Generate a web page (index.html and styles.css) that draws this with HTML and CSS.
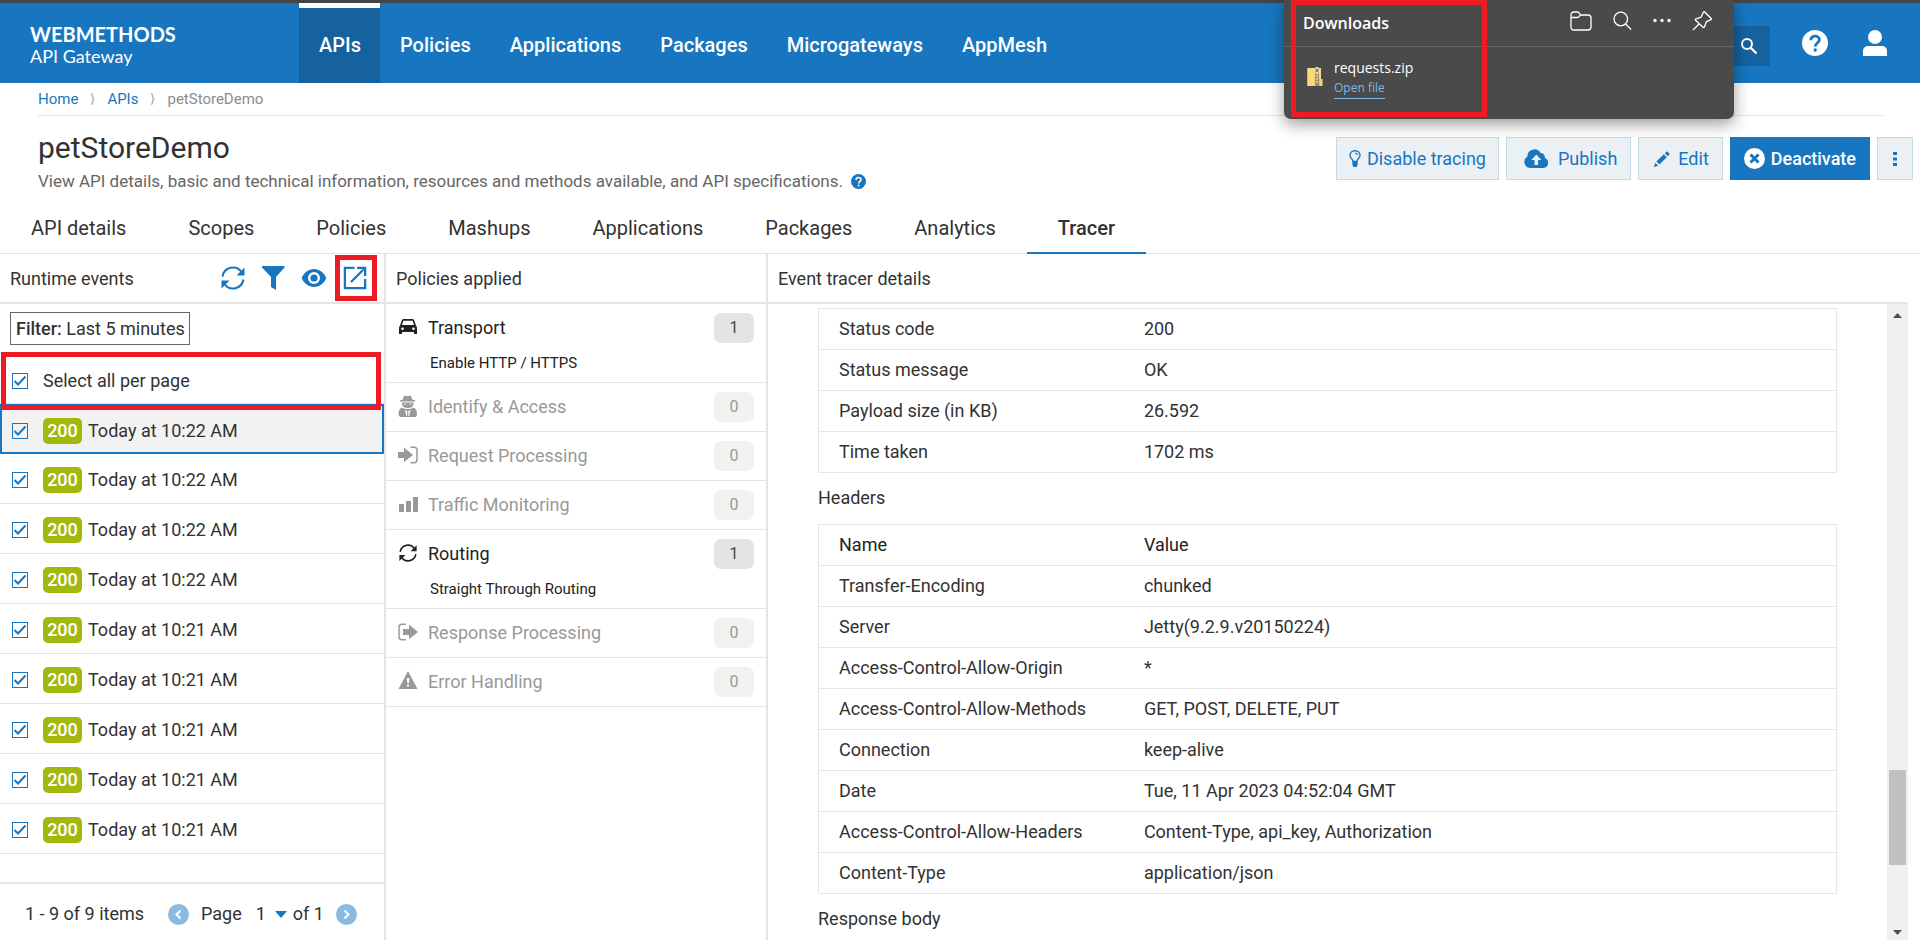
FILE: index.html
```html
<!DOCTYPE html>
<html lang="en">
<head>
<meta charset="utf-8">
<title>API Gateway - petStoreDemo</title>
<link rel="stylesheet" href="styles.css">
</head>
<body>
<svg class="sprite" aria-hidden="true">
  <symbol id="i-sync" viewBox="0 0 24 24"><path fill="none" stroke="currentColor" stroke-width="2.1" d="M1.6 10.5A10.4 10.4 0 0 1 20.6 6.300M22.400 13.500A10.4 10.4 0 0 1 3.400 17.700"/><path fill="currentColor" d="M23.500 1.500v8h-8zM.5 22.500v-8h8z"/></symbol>
  <symbol id="i-check" viewBox="0 0 16 16"><path fill="none" stroke="currentColor" stroke-width="2" d="M2.500 8l3.500 3.500 7.500-8"/></symbol>
  <symbol id="i-help" viewBox="0 0 26 26"><circle cx="13" cy="13" r="13" fill="currentColor"/><path fill="none" class="cut" stroke-width="2.800" d="M8.800 10.200c0-5.600 8.600-5.300 8.600-.4 0 3.200-4.200 3.200-4.200 6.700"/><circle class="cutfill" cx="13.200" cy="20" r="1.700"/></symbol>
</svg>

<header class="topbar">
  <div class="brand"><strong>WEBMETHODS</strong><span>API Gateway</span></div>
  <nav class="mainnav">
    <a class="current" href="#">APIs</a><a href="#">Policies</a><a href="#">Applications</a><a href="#">Packages</a><a href="#">Microgateways</a><a href="#">AppMesh</a>
  </nav>
  <div class="tools">
    <button class="search" aria-label="Search"><svg width="18" height="18" viewBox="0 0 18 18"><circle cx="7" cy="7" r="5" fill="none" stroke="currentColor" stroke-width="2"/><path stroke="currentColor" stroke-width="2.400" d="M10.500 10.500l6 6"/></svg></button>
    <button class="tool" aria-label="Help"><svg class="on-blue" width="26" height="26"><use href="#i-help"/></svg></button>
    <button class="tool" aria-label="Account"><svg width="26" height="26" viewBox="0 0 26 26"><circle cx="13" cy="7" r="7" fill="currentColor"/><path fill="currentColor" d="M1 26v-5c0-3 2-5 6-5h12c4 0 6 2 6 5v5z"/></svg></button>
  </div>
</header>

<nav class="crumbs"><a href="#">Home</a><i>⟩</i><a href="#">APIs</a><i>⟩</i><span>petStoreDemo</span></nav>

<section class="intro">
  <div>
    <h1>petStoreDemo</h1>
    <p>View API details, basic and technical information, resources and methods available, and API specifications. <svg class="hint" width="15" height="15"><use href="#i-help"/></svg></p>
  </div>
  <div class="actions">
    <button><svg width="12" height="17" viewBox="0 0 12 17"><path fill="none" stroke="currentColor" stroke-width="1.400" d="M4 11.500C4 9 1 8.500 1 5.300a5 4.600 0 0 1 10 0C11 8.500 8 9 8 11.500z"/><path fill="none" stroke="currentColor" stroke-width="1.100" d="M6 3.200c1.500 0 2.300.7 2.300 1.800"/><path fill="currentColor" d="M3.400 11.500h5.200v3.200L7.500 17h-3l-1.100-2.300z"/></svg>Disable tracing</button>
    <button class="publish"><svg width="25" height="19" viewBox="0 0 25 19"><path fill="currentColor" fill-rule="evenodd" d="M6 19a6 6 0 0 1-2.600-11.200A7 7 0 0 1 16.500 4a4.200 4.200 0 0 1 4.300 5A5.200 5.200 0 0 1 19.500 19zM12.300 5.500l-5 5.500h3.200v5h3.600v-5h3.200z"/></svg>Publish</button>
    <button class="edit"><svg width="16" height="16" viewBox="0 0 16 16"><path fill="currentColor" d="M0 16l1.200-4.200 3 3zM2.400 10.600L9.800 3.200 12.800 6.200 5.400 13.600zM10.800 2.200L12.300.7q.6-.6 1.200 0l1.800 1.800q.6.600 0 1.200l-1.500 1.500z"/></svg>Edit</button>
    <button class="primary"><svg width="21" height="21" viewBox="0 0 21 21"><circle cx="10.500" cy="10.500" r="10.500" fill="currentColor"/><path class="cut" stroke-width="3" d="M6.500 6.500l8 8M14.500 6.500l-8 8"/></svg>Deactivate</button>
    <button class="more" aria-label="More"><svg width="4" height="16" viewBox="0 0 4 16"><path fill="currentColor" d="M0 1h4v3H0zM0 6.500h4v3H0zM0 12h4v3H0z"/></svg></button>
  </div>
</section>

<nav class="tabs">
  <a href="#">API details</a><a href="#">Scopes</a><a href="#">Policies</a><a href="#">Mashups</a><a href="#">Applications</a><a href="#">Packages</a><a href="#">Analytics</a><a class="current" href="#">Tracer</a>
</nav>

<main class="tracer">
  <section class="panel events">
    <header class="panel-head">
      <h2>Runtime events</h2>
      <div class="icons">
        <button aria-label="Refresh"><svg width="24" height="24"><use href="#i-sync"/></svg></button>
        <button aria-label="Filter"><svg width="24" height="24" viewBox="0 0 24 24"><path fill="currentColor" d="M1 0h22.500v1.500L15 11v13l-5-3V11L1 1.500z"/></svg></button>
        <button aria-label="Show"><svg width="26" height="24" viewBox="0 0 26 24"><path fill="currentColor" fill-rule="evenodd" d="M13 3C7.500 3 3 6.500.7 12 3 17.500 7.500 21 13 21s10-3.500 12.300-9C23 6.500 18.500 3 13 3zm0 3a6 6 0 1 1 0 12 6 6 0 0 1 0-12z"/><circle cx="13" cy="12" r="3.600" fill="currentColor"/></svg></button>
        <button class="marked-icon" aria-label="Export"><svg width="24" height="24" viewBox="0 0 24 24"><path fill="none" stroke="currentColor" stroke-width="2.300" d="M11.500 1.900H1.900v20.200h20.200V13M8 16L20 4"/><path fill="currentColor" d="M14 .8h9.300V10h-2.300V4.800L19.200 3H14z"/></svg></button>
      </div>
    </header>
    <div class="filter"><span><b>Filter:</b> Last 5 minutes</span></div>
    <ul class="rows">
      <li class="all"><label><input type="checkbox" checked><svg width="16" height="16"><use href="#i-check"/></svg>Select all per page</label></li>
      <li class="selected"><label><input type="checkbox" checked><svg width="16" height="16"><use href="#i-check"/></svg><b>200</b>Today at 10:22 AM</label></li>
      <li><label><input type="checkbox" checked><svg width="16" height="16"><use href="#i-check"/></svg><b>200</b>Today at 10:22 AM</label></li>
      <li><label><input type="checkbox" checked><svg width="16" height="16"><use href="#i-check"/></svg><b>200</b>Today at 10:22 AM</label></li>
      <li><label><input type="checkbox" checked><svg width="16" height="16"><use href="#i-check"/></svg><b>200</b>Today at 10:22 AM</label></li>
      <li><label><input type="checkbox" checked><svg width="16" height="16"><use href="#i-check"/></svg><b>200</b>Today at 10:21 AM</label></li>
      <li><label><input type="checkbox" checked><svg width="16" height="16"><use href="#i-check"/></svg><b>200</b>Today at 10:21 AM</label></li>
      <li><label><input type="checkbox" checked><svg width="16" height="16"><use href="#i-check"/></svg><b>200</b>Today at 10:21 AM</label></li>
      <li><label><input type="checkbox" checked><svg width="16" height="16"><use href="#i-check"/></svg><b>200</b>Today at 10:21 AM</label></li>
      <li><label><input type="checkbox" checked><svg width="16" height="16"><use href="#i-check"/></svg><b>200</b>Today at 10:21 AM</label></li>
    </ul>
    <footer class="pager">
      <span class="count">1 - 9 of 9 items</span>
      <button aria-label="Previous page"><svg width="21" height="21" viewBox="0 0 21 21"><circle cx="10.500" cy="10.500" r="10.500" fill="currentColor"/><path class="cut" fill="none" stroke-width="2" d="M12.500 6.500l-4 4 4 4"/></svg></button>
      <label for="page">Page</label>
      <span class="pick"><select id="page"><option>1</option></select><svg width="12" height="7" viewBox="0 0 12 7"><path fill="currentColor" d="M0 0h12L6 7z"/></svg></span>
      <span>of 1</span>
      <button class="next" aria-label="Next page"><svg width="21" height="21" viewBox="0 0 21 21"><circle cx="10.500" cy="10.500" r="10.500" fill="currentColor"/><path class="cut" fill="none" stroke-width="2" d="M8.500 6.500l4 4-4 4"/></svg></button>
    </footer>
  </section>

  <section class="panel policies">
    <header class="panel-head"><h2>Policies applied</h2></header>
    <ul>
      <li class="on"><div><svg width="20" height="20" viewBox="0 0 20 20"><path fill="currentColor" fill-rule="evenodd" d="M1 17v-6c0-1 .3-1.800 1-2.300l1.600-5C4 2.500 4.700 2 6 2h8c1.300 0 2 .5 2.400 1.700l1.600 5c.7.5 1 1.300 1 2.300v6h-3v-2H4v2zM5.300 3.800L4 8h12l-1.300-4.200zM4.500 10.500a1.300 1.300 0 1 0 0 2.600 1.300 1.300 0 0 0 0-2.600zm11 0a1.300 1.300 0 1 0 0 2.600 1.300 1.300 0 0 0 0-2.600z"/></svg><span>Transport</span><em>1</em></div><p>Enable HTTP / HTTPS</p></li>
      <li><div><svg width="20" height="22" viewBox="0 0 20 22"><path fill="currentColor" fill-rule="evenodd" d="M6 1q1.200-1 2.200 0 1.300.600 2.600 0 1-1 2.200 0l1.200 3.600 3 .6v1.300H2V5.200l2.800-.6zM4 7.500h11.500v2Q14.500 13 9.700 13 5 13 4 9.500zM6 8.800v.8h2.600v-.8zm5 0v.8h2.600v-.8zM3.500 12.500Q6 14 9.700 14t6.300-1.500q3 2 3 6.500 0 3-2.500 3h-13Q.5 22 .5 19q0-4.500 3-6.500zM7 15l1.300 6h.9V16zm5.500 0l-2.200 1v5h.9z"/></svg><span>Identify &amp; Access</span><em>0</em></div></li>
      <li><div><svg width="20" height="20" viewBox="0 0 20 20"><path fill="currentColor" d="M0 7h6V2.500l9 7.500-9 7V13H0z"/><path fill="none" stroke="currentColor" stroke-width="1.500" d="M12.500 2.200H16q3 0 3 3v9.500q0 3-3 3h-3.500"/></svg><span>Request Processing</span><em>0</em></div></li>
      <li><div><svg width="20" height="20" viewBox="0 0 20 20"><path fill="currentColor" d="M1 10h5v8H1zM8 7h5v11H8zM15 3h5v15h-5z"/></svg><span>Traffic Monitoring</span><em>0</em></div></li>
      <li class="on"><div><svg width="20" height="18"><use href="#i-sync"/></svg><span>Routing</span><em>1</em></div><p>Straight Through Routing</p></li>
      <li><div><svg width="20" height="20" viewBox="0 0 20 20"><path fill="currentColor" d="M5 7h6V2.500l9 7.500-9 7V13H5z"/><path fill="none" stroke="currentColor" stroke-width="1.500" d="M8 2.200H4q-3 0-3 3v9.500q0 3 3 3h4"/></svg><span>Response Processing</span><em>0</em></div></li>
      <li><div><svg width="20" height="20" viewBox="0 0 20 20"><path fill="currentColor" fill-rule="evenodd" d="M10 0l9.500 18H.5zM8.800 7l.4 5h1.800l.4-5zm.2 6.500v2h2v-2z"/></svg><span>Error Handling</span><em>0</em></div></li>
    </ul>
  </section>

  <section class="panel details">
    <header class="panel-head"><h2>Event tracer details</h2></header>
    <div class="viewport">
      <div class="content">
        <table>
          <tr><td>Status code</td><td>200</td></tr>
          <tr><td>Status message</td><td>OK</td></tr>
          <tr><td>Payload size (in KB)</td><td>26.592</td></tr>
          <tr><td>Time taken</td><td>1702 ms</td></tr>
        </table>
        <h3>Headers</h3>
        <table>
          <tr><th>Name</th><th>Value</th></tr>
          <tr><td>Transfer-Encoding</td><td>chunked</td></tr>
          <tr><td>Server</td><td>Jetty(9.2.9.v20150224)</td></tr>
          <tr><td>Access-Control-Allow-Origin</td><td>*</td></tr>
          <tr><td>Access-Control-Allow-Methods</td><td>GET, POST, DELETE, PUT</td></tr>
          <tr><td>Connection</td><td>keep-alive</td></tr>
          <tr><td>Date</td><td>Tue, 11 Apr 2023 04:52:04 GMT</td></tr>
          <tr><td>Access-Control-Allow-Headers</td><td>Content-Type, api_key, Authorization</td></tr>
          <tr><td>Content-Type</td><td>application/json</td></tr>
        </table>
        <h3>Response body</h3>
      </div>
      <div class="scrollbar">
        <svg width="9" height="5" viewBox="0 0 9 5"><path fill="currentColor" d="M0 5h9L4.500 0z"/></svg>
        <div class="track"><div class="thumb"></div></div>
        <svg width="9" height="5" viewBox="0 0 9 5"><path fill="currentColor" d="M0 0h9L4.500 5z"/></svg>
      </div>
    </div>
  </section>
</main>

<aside class="downloads">
  <header>
    <h2>Downloads</h2>
    <svg width="22" height="20" viewBox="0 0 22 20"><path fill="none" stroke="currentColor" stroke-width="1.300" d="M1 16V4q0-3 3-3h3.500q1 0 1.600.8L10.500 4H18q3 0 3 3v9q0 3-3 3H4q-3 0-3-3zM1 6.500h6.500q1 0 1.600-.8L10.500 4"/></svg>
    <svg width="19" height="20" viewBox="0 0 19 20"><circle cx="7.800" cy="8" r="6.800" fill="none" stroke="currentColor" stroke-width="1.300"/><path stroke="currentColor" stroke-width="1.400" d="M12.600 13l5.500 5.500"/></svg>
    <svg width="18" height="20" viewBox="0 0 18 20"><g fill="currentColor"><circle cx="2" cy="9.500" r="1.700"/><circle cx="9" cy="9.500" r="1.700"/><circle cx="16" cy="9.500" r="1.700"/></g></svg>
    <svg width="20" height="20" viewBox="0 0 20 20"><path fill="none" stroke="currentColor" stroke-width="1.300" stroke-linejoin="round" d="M12.500.8l6.700 6.700q.4 1-.7 1.300l-4 1.800-2 5.200q-.7 1-1.500.5L3.500 9.300q-.4-1 .5-1.400l5.200-1.800 2-4.600q.5-1 1.300-.7zM6.800 13.300L1 19"/></svg>
  </header>
  <div class="file">
    <svg width="16" height="20" viewBox="0 0 16 20"><path fill="#fbd878" d="M0 1h14v11h1.500v7H0z"/><path fill="#e0b047" d="M0 1h1v18H0zM12.500 12v7h.8v-7z"/><path fill="#a58f62" d="M8 1h4v18H8z"/><path fill="#d9d9d9" d="M8.500 0h3v7h-3zM9.300 8h1.400v2H9.300zM9.300 11h1.400v2H9.300zM9.300 14h1.400v2H9.300z"/><path fill="#555" d="M9.300 2h1.400v3H9.300z"/></svg>
    <div><span>requests.zip</span><a href="#">Open file</a></div>
  </div>
  <div class="download-mark"></div>
</aside>
</body>
</html>
```
FILE: styles.css
```css
* { box-sizing: border-box; }
body {
  margin: 0;
  height: 100vh;
  display: flex;
  flex-direction: column;
  overflow: hidden;
  position: relative;
  background: #fff;
  color: #323232;
  font: 18px/24px Roboto, sans-serif;
}
h1, h2, h3, p, ul { margin: 0; padding: 0; font-weight: 400; }
ul { list-style: none; }
a { color: inherit; text-decoration: none; }
svg { display: block; flex: none; }
i, em { font-style: normal; }
button { font: inherit; color: inherit; background: none; border: 0; padding: 0; display: flex; align-items: center; }
.sprite { position: absolute; width: 0; height: 0; }
.cut { stroke: #fff; }
.cutfill { fill: #fff; }
.on-blue { --cut: #1776bf; }

.topbar {
  flex: none;
  display: flex;
  height: 83px;
  border-top: 3px solid #444;
  background: #1776bf;
  color: #fff;
}
.brand { width: 299px; padding: 20px 0 0 30px; font: 20px/22px Lato, sans-serif; }
.brand strong { display: block; font-weight: 700; }
.brand span { display: block; font-size: 18px; }
.mainnav { display: flex; flex: 1; font-size: 20px; font-weight: 500; }
.mainnav a { padding: 30px 19px 0 20px; border-top: 0 solid #fff; }
.mainnav .current { padding-top: 25px; border-top-width: 5px; background: #15629f; }
.tools { display: flex; align-items: flex-start; padding: 23px 32px 0 0; }
.search { width: 80px; height: 40px; margin-right: 32px; padding-right: 12px; justify-content: flex-end; background: #15629f; }
.tool { margin-top: 4px; }
.tool + .tool { margin-left: 34px; }
#i-help .cut { stroke: var(--cut, #fff); }
#i-help .cutfill { fill: var(--cut, #fff); }

.crumbs {
  flex: none;
  display: flex;
  height: 33px;
  margin: 0 37px 0 38px;
  padding-top: 4px;
  border-bottom: 1px solid #dfe3e8;
  color: #1776bf;
  font-size: 15px;
}
.crumbs i { margin: 0 12px; color: #999; font-size: 13px; }
.crumbs span { color: #8c8c8c; }

.intro { flex: none; display: flex; justify-content: space-between; padding: 16px 7px 0 38px; height: 85px; }
.intro h1 { font-size: 30px; line-height: 32px; }
.intro p { display: flex; align-items: center; gap: 8px; padding-top: 5px; color: #666; font-size: 17px; }
.hint { color: #1776bf; }
.actions { display: flex; gap: 7px; padding-top: 5px; color: #1776bf; }
.actions button { height: 43px; padding: 0 12px; gap: 6px; border: 1px solid #c3dbe3; background: #ebf0f5; }
.actions .publish { padding: 0 13px 0 17px; gap: 9px; }
.actions .edit { padding: 0 13px 0 15px; gap: 8px; }
.actions .primary { padding: 0 13px; background: #1776bf; border-color: #1776bf; color: #fff; font-weight: 500; }
.actions .primary .cut { stroke: #1776bf; }
.actions .more { width: 36px; padding: 0; justify-content: center; }

.tabs { flex: none; display: flex; height: 53px; border-bottom: 1px solid #e4e4e4; font-size: 20px; }
.tabs a { height: 53px; padding: 15px 31px 0; }
.tabs .current { border-bottom: 2px solid #1776bf; font-weight: 500; }

.tracer { flex: 1; min-height: 0; display: grid; grid-template-columns: 386px 382px 1fr; padding-right: 12px; }
.panel { display: flex; flex-direction: column; min-width: 0; min-height: 0; border-right: 2px solid #e4e4e4; }
.details { border-right: 0; }
.panel-head { flex: none; display: flex; align-items: center; justify-content: space-between; height: 50px; padding-left: 10px; border-bottom: 2px solid #e4e4e4; }
.panel-head h2 { padding-top: 2px; font-size: 18px; }
.icons { display: flex; align-items: center; color: #1776bf; gap: 16px; padding-right: 7px; }
.icons .marked-icon { height: 46px; width: 42px; margin-left: -8px; padding-right: 3px; border: 5px solid #ed1c24; justify-content: center; }

.filter { flex: none; padding: 8px 10px; height: 50px; border-bottom: 1px solid #e4e4e4; }
.filter span { display: inline-block; height: 33px; padding: 4px 4px 4px 5px; border: 1px solid #666; }
.filter b { font-weight: 500; }
.rows { flex: 1; }
.rows li { height: 50px; padding: 3px 12px 0; border-bottom: 1px solid #e4e4e4; }
.rows label { display: flex; align-items: center; height: 100%; color: #323232; }
.rows input { appearance: none; width: 16px; height: 16px; margin: 0; border: 1px solid #1776bf; }
.rows svg { margin: 0 15px 0 -16px; color: #1776bf; }
.rows b { width: 39px; margin-right: 6px; border-radius: 5px; background: #a2b90b; color: #fff; font-weight: 500; line-height: 26px; text-align: center; }
.rows .all { position: relative; padding-top: 5px; }
.rows .all::after { content: ""; position: absolute; inset: -2px 3px -7px 1px; border: 5px solid #ed1c24; }
.rows .selected { padding: 3px 10px 0; border: 2px solid #1776bf; background: #f2f2f2; }
.pager { flex: none; display: flex; align-items: center; height: 58px; padding: 4px 0 0 25px; border-top: 2px solid #e4e4e4; }
.pager button { color: #8bbae0; }
.count { margin-right: 24px; }
.pager label { margin: 0 14px 0 12px; }
.pick { display: flex; align-items: center; gap: 8px; margin-right: 6px; }
.pick select { appearance: none; border: 0; padding: 0; background: none; font: inherit; color: inherit; }
.pick svg { color: #1776bf; }
.next { margin-left: 12px; }

.policies li { padding: 9px 12px; border-bottom: 1px solid #e4e4e4; color: #999; }
.policies div { display: flex; align-items: center; }
.policies svg { margin-bottom: 3px; }
.policies span { flex: 1; padding-left: 10px; }
.policies em { width: 40px; border-radius: 7px; background: #f2f2f1; font-size: 16px; line-height: 30px; text-align: center; }
.policies .on { color: #222; }
.policies .on em { background: #e4e4e3; color: #444; }
.policies p { margin-top: 10px; padding-left: 32px; font-size: 15px; line-height: 20px; }

.viewport { flex: 1; min-height: 0; display: flex; }
.content { flex: 1; overflow: hidden; padding: 4px 50px 0; }
.content table { width: 100%; border-collapse: collapse; border: 1px solid #e6e6e6; }
.content td, .content th { height: 41px; padding: 0 20px; border-bottom: 1px solid #e6e6e6; font-weight: 400; text-align: left; }
.content th { color: #222; }
.content td:first-child, .content th:first-child { width: 30%; }
.content h3 { padding: 13px 0 14px; font-size: 18px; }
.scrollbar { width: 21px; display: flex; flex-direction: column; align-items: center; padding: 9px 0 5px; background: #f0f0f0; color: #505050; }
.track { flex: 1; display: flex; flex-direction: column; align-self: stretch; padding: 0 2px; justify-content: flex-end; }
.thumb { height: 95px; margin-bottom: 65px; background: #c1c1c1; }

.downloads {
  position: absolute;
  top: 0;
  right: 186px;
  width: 450px;
  height: 119px;
  border-radius: 0 0 7px 7px;
  background: #4a4a4a;
  box-shadow: 0 5px 16px rgba(0, 0, 0, 0.4);
  color: #fff;
  font-family: "Open Sans", sans-serif;
}
.downloads header { display: flex; height: 47px; padding: 11px 22px 0 19px; border-bottom: 1px solid #666; gap: 21px; }
.downloads h2 { flex: 1; font-size: 16px; font-weight: 600; line-height: 24px; }
.file { display: flex; gap: 11px; padding: 11px 23px; }
.file svg { margin-top: 9px; }
.file span, .file a { display: block; width: max-content; font-size: 14px; line-height: 20px; }
.file a { border-bottom: 1px solid #79b8f0; color: #79b8f0; font-size: 12px; }
.download-mark { position: absolute; top: 0; left: 7px; width: 196px; height: 117px; border: 5px solid #ed1c24; }
```
